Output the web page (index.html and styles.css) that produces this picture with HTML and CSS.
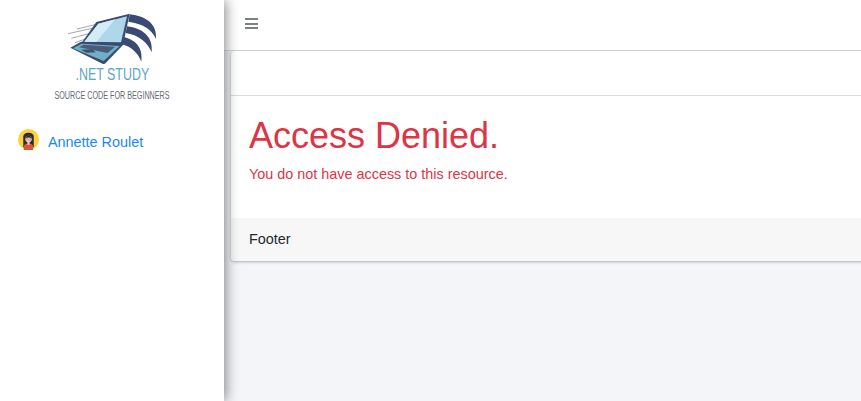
FILE: index.html
```html
<!DOCTYPE html>
<html lang="en">
<head>
  <meta charset="UTF-8" />
  <title>Access Denied</title>
  <link rel="stylesheet" href="styles.css">
</head>
<body>
  <aside class="sidebar">
    <div class="brand">
      <svg class="brand-art" viewBox="85 40 267 156" width="89" height="52">
        <!-- speed lines -->
        <g fill="none" stroke="#8b95aa" stroke-width="2.500">
          <path d="M112 88 L166 75" />
          <path d="M85 102 L158 86" />
          <path d="M95 116 L150 101" />
          <path d="M106 129 L140 117" />
        </g>
        <!-- wings behind the screen -->
        <g fill="#3b4a72">
          <path d="M270 44 C320 50 352 72 349 118 C336 88 310 72 266 66 Z" />
          <path d="M262 80 C310 86 341 112 336 158 C322 126 296 106 258 100 Z" />
          <path d="M252 112 C286 120 311 142 305 186 C295 160 275 142 248 134 Z" />
        </g>
        <!-- laptop -->
        <path d="M170 67 L270 42 L250 136 L124 132 Z" fill="#3b4a72" />
        <path d="M176 72 L262 50 L244 128 L134 126 Z" fill="#aed8ea" />
        <path d="M176 72 L226 59 L170 127 L134 126 Z" fill="#d3ecf5" />
        <path d="M92 144 L124 126 L252 134 L196 192 L190 193 Z" fill="#3b4a72" />
        <path d="M100 146 L126 132 L240 139 L192 184 Z" fill="#6fb0c4" />
        <path d="M118 143 L132 135 L226 141 L204 160 Z" fill="#4a5d78" />
        <path d="M124 150 L158 149 L168 158 L140 159 Z" fill="#3f5068" />
      </svg>
      <div class="brand-name">.NET STUDY</div>
      <div class="brand-tag">SOURCE CODE FOR BEGINNERS</div>
    </div>
    <a class="user" href="#">
      <svg class="avatar" viewBox="0 0 22 22" width="21" height="21">
        <circle cx="11" cy="11" r="11" fill="#fdd13a" />
        <path d="M5.500 19 L5.500 8 C5.500 2.500 16.500 2.500 16.500 8 L16.500 19 Z" fill="#2c2a2e" />
        <path d="M6 22 L6.500 17 C7.500 15 14.500 15 15.500 17 L16 22 Z" fill="#d9553a" />
        <rect x="9.800" y="13" width="2.400" height="3.500" fill="#f2cdbb" />
        <circle cx="11" cy="10.500" r="3.400" fill="#f2cdbb" />
        <path d="M7.500 10 C7.500 6 14.500 6 14.500 10 C12.500 8.500 9.500 8.500 7.500 10 Z" fill="#2c2a2e" />
        <g fill="none" stroke="#8a8a8a" stroke-width="0.500">
          <circle cx="9.500" cy="10.800" r="1.100" />
          <circle cx="12.500" cy="10.800" r="1.100" />
        </g>
      </svg>
      <span>Annette Roulet</span>
    </a>
  </aside>

  <div class="main">
    <header class="topbar">
      <span class="burger"><i></i><i></i><i></i></span>
    </header>
    <div class="content">
      <div class="card">
        <div class="card-header"></div>
        <div class="card-body">
          <h1>Access Denied.</h1>
          <p>You do not have access to this resource.</p>
        </div>
        <div class="card-footer">Footer</div>
      </div>
    </div>
  </div>
</body>
</html>
```

FILE: styles.css
```css
* {
  margin: 0; padding: 0; box-sizing: border-box;
}

html, body {
  height: 100%;
  overflow: hidden;
}

body {
  display: flex;
  font-family: "Liberation Sans", Arial, sans-serif;
  font-size: 14.4px;
  background: #f4f5f9;
  color: #23282c;
}

.sidebar {
  width: 224px;
  flex: none;
  background: #fff;
  box-shadow: 2px 0 12px rgba(0, 0, 0, 0.45);
  position: relative;
  z-index: 2;
}

.brand {
  display: flex;
  flex-direction: column;
  align-items: center;
  padding-top: 13px;
  height: 131px;
}

.brand-art {
  display: block;
  margin-left: 1px;
}

.brand-name {
  font-size: 17px;
  line-height: 20px;
  color: #5aa5c4;
  transform: scaleX(0.73);
}

.brand-tag {
  margin-top: 5px;
  font-size: 10px;
  line-height: 12px;
  color: #666b75;
  white-space: nowrap;
  transform: scaleX(0.72);
}

.user {
  display: flex;
  align-items: center;
  gap: 9px;
  padding-left: 18px;
  color: #1a85ff;
  text-decoration: none;
  line-height: 22px;
}

.avatar {
  position: relative;
  top: -3px;
}

.main {
  flex: 1;
  min-width: 0;
}

.topbar {
  height: 51px;
  background: #fff;
  border-bottom: 1px solid #d8dbe0;
  display: flex;
  align-items: center;
  padding-left: 21px;
}

.burger {
  display: flex;
  flex-direction: column;
  gap: 2.5px;
  width: 13px;
  margin-top: -3px;
}

.burger i {
  height: 2px;
  background: #7c7f85;
}

.content {
  padding-left: 7px;
  margin-right: -8px;
}

.card {
  background: #fff;
  border-radius: 4px;
  box-shadow: 0 1px 3px rgba(0, 0, 0, 0.3);
}

.card-header {
  height: 45px;
  border-bottom: 1px solid #d8dbe0;
}

.card-body {
  height: 122px;
  padding: 20px 18px 0;
}

h1 {
  font-weight: 400;
  font-size: 36px;
  line-height: 40px;
  color: #dc3545;
}

.card-body p {
  margin-top: 8px;
  line-height: 20px;
  color: #dc3545;
}

.card-footer {
  height: 43px;
  padding: 0 18px;
  line-height: 43px;
  background: #f7f7f7;
  border-radius: 0 0 4px 4px;
  color: #23282c;
}
```
